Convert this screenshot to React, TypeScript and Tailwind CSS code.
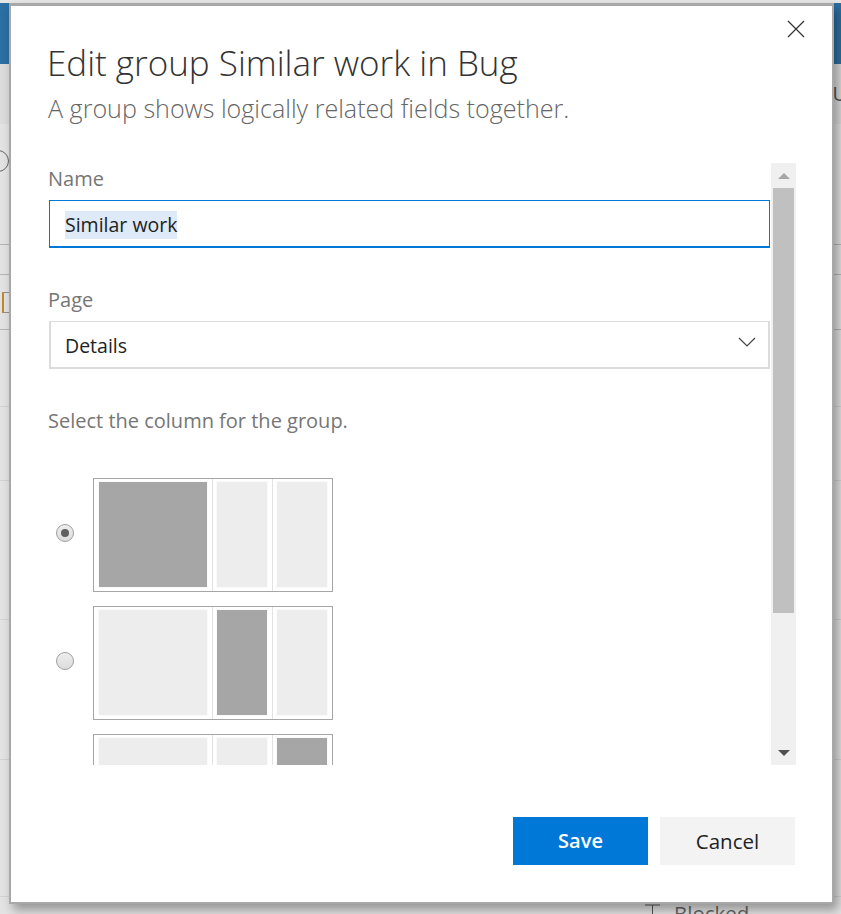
import React from 'react';

const font = { fontFamily: '"Open Sans", "Noto Sans", sans-serif' };

function Fill({ on, className }: { on?: boolean; className: string }) {
	return <div className={`${className} shrink-0 h-full shadow-[0_0_0_1px_#fafafa] ${on ? 'bg-[#a6a6a6]' : 'bg-[#ededed]'}`}></div>;
}

function Layout({ active }: { active: number }) {
	return (
		<div className="w-[240px] h-[114px] shrink-0 border border-[#a6a6a6] bg-white flex">
			<div className="pl-[5px] pt-[3px] pb-[4px] pr-[5px] border-r border-[#e2e2e2]">
				<Fill on={active === 0} className="w-[108px]" />
			</div>
			<div className="pl-[4px] pt-[3px] pb-[4px] pr-[5px] border-r border-[#e2e2e2]">
				<Fill on={active === 1} className="w-[50px]" />
			</div>
			<div className="pl-[4px] pt-[3px] pb-[4px] pr-[5px]">
				<Fill on={active === 2} className="w-[50px]" />
			</div>
		</div>
	);
}

function Radio({ checked }: { checked?: boolean }) {
	return (
		<div className="w-[18px] h-[18px] -mt-[5px] rounded-full border border-[#a0a0a0] bg-gradient-to-b from-[#eeeeee] to-[#dcdcdc] flex items-center justify-center">
			{checked && <div className="w-[8px] h-[8px] rounded-full bg-[#5f5f5f]"></div>}
		</div>
	);
}

export default function App() {
	return (
		<div className="relative w-[841px] h-[914px] overflow-hidden bg-[#e3e3e3]" style={font}>
			<div className="h-[3px] bg-[#e6e6e6]"></div>
			<div className="h-[61px] bg-[#2b6fa3]"></div>
			<div className="h-[60px] bg-[#dcdcdc] flex justify-end items-center">
				<span className="text-[#555] text-[20px] -mr-[6px]">U</span>
			</div>
			<div className="h-[121px] border-b border-[#b5b5b5] pt-[26px]">
				<div className="w-[22px] h-[22px] -ml-[13px] rounded-full border border-[#666]"></div>
			</div>
			<div className="h-[30px] border-b border-[#b5b5b5]"></div>
			<div className="h-[55px] border-b border-[#b5b5b5] pt-[17px] pl-[2px]">
				<div className="w-[8px] h-[21px] border border-l-2 border-[#8f8f8f] border-l-[#c08a2a]"></div>
			</div>
			<div className="h-[77px] border-b border-[#d2d2d2]"></div>
			<div className="h-[74px] border-b border-[#d2d2d2]"></div>
			<div className="h-[139px] border-b border-[#d2d2d2]"></div>
			<div className="h-[140px] border-b border-[#d2d2d2]"></div>
			<div className="h-[137px] border-b border-[#d2d2d2]"></div>
			<div className="flex items-start gap-[14px] pl-[645px] pt-[3px] text-[#666] text-[20.5px] leading-[26px]">
				<svg viewBox="0 0 15 12" width="15" height="12" fill="none" stroke="#555" className="mt-[4px]"><path d="M0 1H15M7.5 1V11M4 11H11" /></svg>
				<span>Blocked</span>
			</div>

			<div className="absolute left-[9px] top-[3px] w-[825px] h-[901px] bg-white border-2 border-t-[3px] border-[#a8a8a8] shadow-[4px_6px_10px_rgba(0,0,0,0.35)] flex flex-col pl-[37px] pr-[37px]">
				<button className="absolute right-[27px] top-[14px] w-[18px] h-[18px] text-[#333]">
					<svg viewBox="0 0 18 18" width="18" height="18" fill="none" stroke="currentColor" strokeWidth="1.2">
						<path d="M1 1L17 17M17 1L1 17" />
					</svg>
				</button>

				<h1 className="mt-[33px] -ml-[1px] text-[35px] leading-[48px] font-light text-[#333] whitespace-nowrap">Edit group Similar work in Bug</h1>
				<p className="mt-[5px] text-[25.1px] leading-[32px] font-light text-[#666] whitespace-nowrap">A group shows logically related fields together.</p>

				<div className="mt-[39px] h-[602px] shrink-0 flex -mr-[1px]">
					<div className="w-[723px] overflow-hidden">
						<p className="mt-[2px] text-[20px] leading-[28px] text-[#767676]">Name</p>
						<div className="mt-[7px] ml-[1px] h-[48px] border border-b-[2px] border-[#0078d7] flex items-center pl-[15px] pt-[3px]">
							<span className="bg-[#deeaf8] text-[#222] text-[19.5px] leading-[28px]">Similar work</span>
						</div>

						<p className="mt-[38px] text-[20px] leading-[28px] text-[#767676]">Page</p>
						<div className="mt-[7px] ml-[1px] h-[48px] border-2 border-t border-[#dcdcdc] flex items-center pl-[14px] pr-[12px] justify-between">
							<span className="text-[#222] text-[19.5px] leading-[28px] mt-[3px]">Details</span>
							<svg viewBox="0 0 18 10" width="18" height="10" fill="none" stroke="#444" strokeWidth="1.2" className="-mt-[5px]">
								<path d="M1 1L9 9L17 1" />
							</svg>
						</div>

						<p className="mt-[38px] text-[20px] leading-[28px] text-[#767676]">Select the column for the group.</p>

						<div className="mt-[43px] flex flex-col gap-[14px] pl-[8px]">
							<div className="flex items-center gap-[19px]"><Radio checked /><Layout active={0} /></div>
							<div className="flex items-center gap-[19px]"><Radio /><Layout active={1} /></div>
							<div className="flex items-center gap-[19px]"><div className="w-[18px]"></div><Layout active={2} /></div>
						</div>
					</div>

					<div className="w-[25px] ml-[1px] bg-[#f0f0f0] flex flex-col items-center">
						<div className="h-[25px] flex items-center justify-center">
							<svg viewBox="0 0 12 6" width="12" height="6"><path d="M6 0L12 6H0Z" fill="#a6a6a6" /></svg>
						</div>
						<div className="w-[21px] h-[425px] bg-[#c0c0c0]"></div>
						<div className="flex-1"></div>
						<div className="h-[25px] flex items-center justify-center">
							<svg viewBox="0 0 12 6" width="12" height="6"><path d="M0 0H12L6 6Z" fill="#505050" /></svg>
						</div>
					</div>
				</div>

				<div className="mt-[52px] flex justify-end gap-[12px]">
					<button className="w-[135px] h-[48px] bg-[#0078d7] text-white text-[20px] font-semibold">Save</button>
					<button className="w-[135px] h-[48px] bg-[#f3f3f3] text-[#222] text-[20.5px]">Cancel</button>
				</div>
			</div>
		</div>
	);
}
